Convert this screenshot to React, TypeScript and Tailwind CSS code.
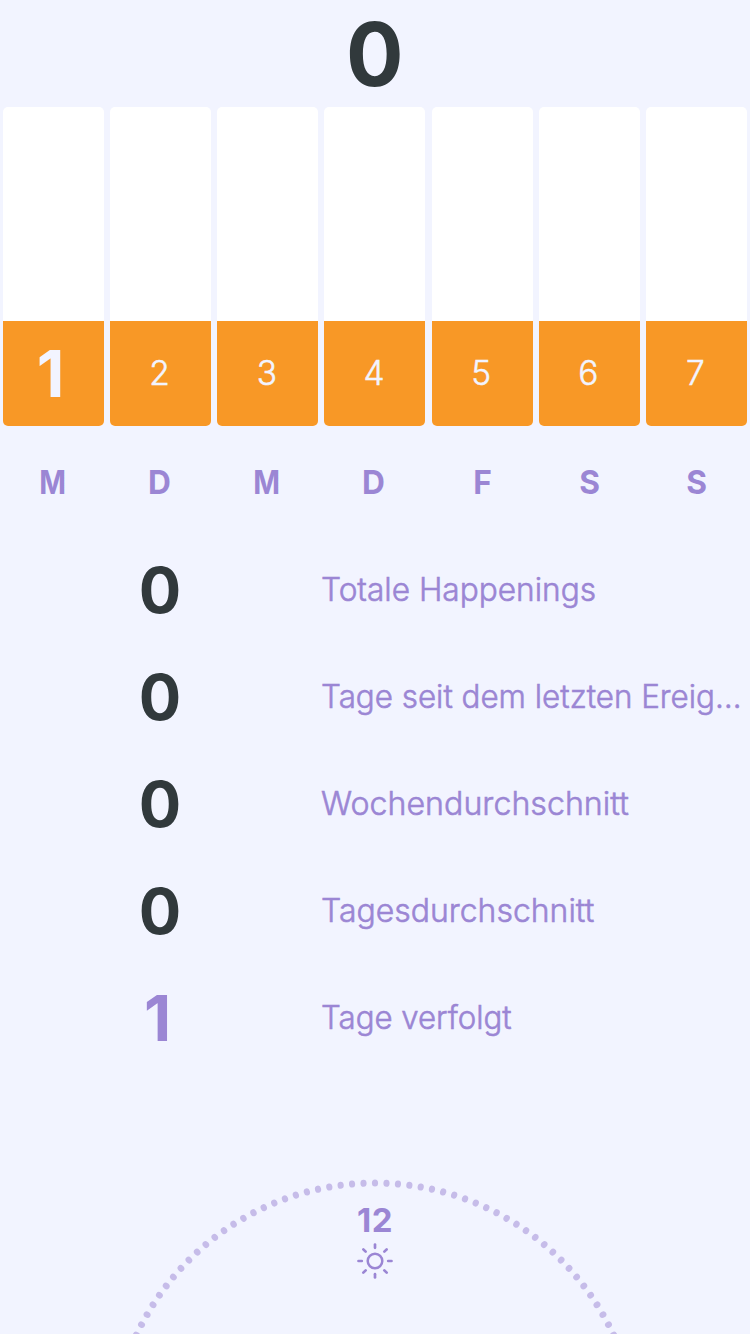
const days = [
  { number: '1', label: 'M', labelShape: '-translate-x-px scale-x-[0.87]' },
  { number: '2', label: 'D', labelShape: '-translate-x-px scale-x-[0.96]' },
  { number: '3', label: 'M', labelShape: '-translate-x-px scale-x-[0.87]' },
  { number: '4', label: 'D', labelShape: '-translate-x-px scale-x-[0.96]' },
  { number: '5', label: 'F', labelShape: 'scale-x-[0.96]' },
  { number: '6', label: 'S', labelShape: 'scale-x-[0.96]' },
  { number: '7', label: 'S', labelShape: 'scale-x-[0.96]' },
];

const stats = [
  { value: '0', label: 'Totale Happenings', shape: 'scale-x-[0.958]' },
  { value: '0', label: 'Tage seit dem letzten Ereig…', shape: 'scale-x-[0.95]' },
  { value: '0', label: 'Wochendurchschnitt', shape: 'scale-x-[0.975]' },
  { value: '0', label: 'Tagesdurchschnitt', shape: 'scale-x-[0.968]' },
  { value: '1', label: 'Tage verfolgt', shape: 'scale-x-[0.945]' },
];

const DOT_COUNT = 144;
const dots = Array.from({ length: DOT_COUNT }, (_, i) => (i * 360) / DOT_COUNT);

function WeekBars() {
  return (
    <div className="grid h-[321px] shrink-0 grid-cols-7">
      {days.map((day, i) => (
        <div key={i} className="px-[3px]">
          <div className="flex h-[319px] w-[101px] flex-col overflow-hidden rounded-[5px] bg-white">
            <div className="flex-1" />
            <div className="flex h-[105px] items-center justify-center bg-[#f89826] text-[#f2f4ff]">
              <span
                className={
                  i === 0
                    ? 'pr-[6px] text-[64px] leading-none font-bold'
                    : 'pr-[2px] text-[33.5px] leading-none font-light [-webkit-text-stroke:0.5px_currentColor]'
                }
              >
                {day.number}
              </span>
            </div>
          </div>
        </div>
      ))}
    </div>
  );
}

function Sun() {
  return (
    <svg width="36" height="36" viewBox="-18 -18 36 36" fill="none" stroke="#9b86d4" strokeWidth="2.7" strokeLinecap="round">
      <circle r="7.3" strokeWidth="2.5" />
      {[0, 45, 90, 135, 180, 225, 270, 315].map((angle) => (
        <path key={angle} d="M0 -13.2V-16.5" transform={`rotate(${angle})`} />
      ))}
    </svg>
  );
}

function Dial() {
  return (
    <div className="relative flex flex-1 flex-col items-center overflow-hidden pt-[133px] text-[#9b86d4]">
      <svg className="absolute inset-0" width="750" height="263" viewBox="0 1071 750 263" fill="#c6bce9">
        {dots.map((angle) => (
          <ellipse key={angle} cx="375" cy="1183" rx="3.1" ry="3.6" transform={`rotate(${angle} 375 1446.2)`} />
        ))}
      </svg>
      <div className="text-[33px] leading-[32px] font-bold tracking-[0.5px]">12</div>
      <div className="mt-[7px]">
        <Sun />
      </div>
    </div>
  );
}

export default function App() {
  return (
    <main className="flex h-[1334px] w-[750px] flex-col overflow-hidden bg-[#f2f4ff] font-['Inter',sans-serif]">
      <header className="flex h-[107px] shrink-0 items-center justify-center pr-px text-[88px] leading-none font-bold text-[#31393c]">
        <span className="scale-x-[0.97]">0</span>
      </header>
      <WeekBars />
      <div className="grid h-[108px] shrink-0 grid-cols-7 items-center text-center text-[33px] leading-none font-bold text-[#9b86d4]">
        {days.map((day, i) => (
          <span key={i} className={day.labelShape}>
            {day.label}
          </span>
        ))}
      </div>
      <section className="flex shrink-0 flex-col">
        {stats.map((stat) => (
          <div key={stat.label} className="flex h-[107px] items-center">
            <div
              className={
                stat.value === '0'
                  ? 'w-[321px] shrink-0 pt-[2px] pr-px text-center text-[63px] leading-none font-bold text-[#31393c]'
                  : 'w-[321px] shrink-0 pt-px pr-[6px] text-center text-[63px] leading-none font-bold text-[#9b86d4]'
              }
            >
              {stat.value}
            </div>
            <div
              className={`origin-left text-[33px] leading-none font-light whitespace-nowrap text-[#9b86d4] [-webkit-text-stroke:0.6px_currentColor] ${stat.shape}`}
            >
              {stat.label}
            </div>
          </div>
        ))}
      </section>
      <Dial />
    </main>
  );
}
